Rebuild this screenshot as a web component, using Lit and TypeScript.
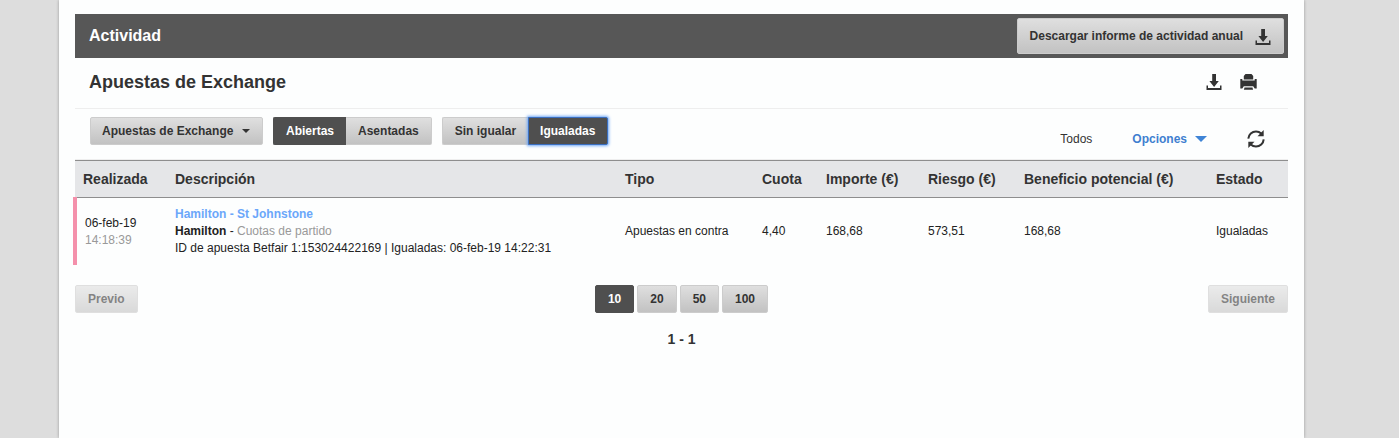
import { LitElement, html, css, svg } from "lit";
import { customElement, state } from "lit/decorators.js";

const downloadIcon = html`<svg class="icon" viewBox="0 0 16 16" width="16" height="16" aria-hidden="true">
  ${svg`<path d="M6.200 0h3.800v7h2.800L8.100 13 3.400 7h2.800z"/><path d="M.5 11.500H2V14h12v-2.500h1.500V16H.5z"/>`}
</svg>`;

const printIcon = html`<svg class="icon" viewBox="0 0 17 16" width="17" height="16" aria-hidden="true">
  ${svg`<path d="M5.500 0h6l1.700 2v3.600H3.800V2z"/><path d="M.3 5h2v1.500h12.400V5h2v9.500h-2l-1.500-2.300H3.800L2.300 14.500h-2z"/><path d="M4.500 13.500h8l.6 2.300H3.900z"/>`}
</svg>`;

const refreshIcon = html`<svg class="icon" viewBox="0 0 18 18" width="18" height="18" aria-hidden="true">
  ${svg`<path d="M1.300 8.600C1.600 4.600 5 1.400 9 1.400c2.200 0 3.900.8 5.200 2.100" fill="none" stroke="#333" stroke-width="2"/>
  <path d="M16.700 0v6.200h-6.200z"/>
  <path d="M16.700 9.400c-.3 4-3.700 7.200-7.700 7.200-2.200 0-3.900-.8-5.200-2.100" fill="none" stroke="#333" stroke-width="2"/>
  <path d="M1.300 18v-6.200h6.200z"/>`}
</svg>`;

interface Bet {
  date: string;
  time: string;
  event: string;
  selection: string;
  market: string;
  detail: string;
  type: string;
  odds: string;
  stake: string;
  risk: string;
  profit: string;
  status: string;
}

const bets: Bet[] = [
  {
    date: "06-feb-19",
    time: "14:18:39",
    event: "Hamilton - St Johnstone",
    selection: "Hamilton",
    market: "Cuotas de partido",
    detail: "ID de apuesta Betfair 1:153024422169 | Igualadas: 06-feb-19 14:22:31",
    type: "Apuestas en contra",
    odds: "4,40",
    stake: "168,68",
    risk: "573,51",
    profit: "168,68",
    status: "Igualadas",
  },
];

@customElement("app-root")
export class AppRoot extends LitElement {
  @state() private settled = "Abiertas";
  @state() private matched = "Igualadas";
  @state() private pageSize = 10;

  static styles = css`
    :host {
      display: block;
      box-sizing: border-box;
      min-height: 100vh;
      padding: 0 95px 0 59px;
      background: #ddd;
      color: #333;
      font: 12px/17px "Liberation Sans", Arial, sans-serif;
    }
    * { box-sizing: border-box; }
    h1, h2, p { margin: 0; }
    button, select { font: inherit; color: inherit; cursor: pointer; }
    .icon { display: block; fill: #333; }
    .panel {
      min-height: 100vh;
      padding: 14px 16px 0;
      background: #fdfefe;
      box-shadow: 0 0 3px rgba(0, 0, 0, 0.3);
    }
    .bar {
      display: flex;
      align-items: center;
      justify-content: space-between;
      padding: 4px 4px 4px 14px;
      background: #575757;
    }
    .bar h1 { color: #fff; font-size: 16px; line-height: 20px; }
    .btn {
      height: 28px;
      padding: 0 12px;
      border: 1px solid #ccc;
      border-radius: 2px;
      background: linear-gradient(#dfdfdf, #c2c2c2);
      font-weight: bold;
      white-space: nowrap;
    }
    .btn.on { background: #4f4f4f; border-color: #4f4f4f; color: #fff; }
    .btn:disabled { opacity: 0.6; cursor: default; }
    .report {
      display: flex;
      align-items: center;
      gap: 12px;
      height: 36px;
    }
    .report .icon { margin-top: 2px; }
    .title {
      display: flex;
      align-items: center;
      justify-content: space-between;
      height: 51px;
      padding: 0 31px 3px 14px;
      border-bottom: 1px solid #eee;
    }
    .title h2 { font-size: 18px; line-height: 22px; }
    .tools { display: flex; gap: 18px; }
    .plain { padding: 0; border: 0; background: none; }
    .toolbar {
      display: flex;
      align-items: flex-start;
      gap: 10px;
      height: 51px;
      padding: 8px 23px 0 15px;
      border-bottom: 1px solid #eee;
    }
    .pick { display: grid; align-items: center; }
    .pick select { grid-area: 1 / 1; appearance: none; padding: 0 28px 0 11px; }
    .pick .caret { grid-area: 1 / 1; justify-self: end; margin-right: 13px; pointer-events: none; }
    .caret { display: block; }
    .group { display: flex; }
    .group .btn:first-child { border-radius: 2px 0 0 2px; border-right: 0; }
    .group .btn:last-child { border-radius: 0 2px 2px 0; border-left: 0; padding: 0 12px; }
    .group .btn.focus { outline: none; border: 1px solid #3b6fc0; padding: 0 12px 0 11px; box-shadow: 0 0 3px 1px #6fa8f7; z-index: 1; }
    .side {
      display: flex;
      align-items: center;
      height: 18px;
      margin: 13px 0 0 auto;
    }
    .options {
      display: flex;
      align-items: center;
      gap: 8px;
      margin: 0 40px;
      color: #3f7fd0;
      font-weight: bold;
    }
    table { width: 100%; border-collapse: collapse; table-layout: fixed; }
    th, td { padding: 0 0 0 8px; text-align: left; }
    thead { background: #e5e6e8; }
    th { height: 37px; box-shadow: inset 0 1px #8e8e8e; font-size: 14px; line-height: 18px; white-space: nowrap; }
    td { padding-top: 9px; padding-bottom: 8px; color: #222; background: linear-gradient(#8e8e8e, #8e8e8e) 0 0 / 100% 1px no-repeat; }
    td:first-child {
      padding-left: 10px;
      background:
        linear-gradient(#f490ab, #f490ab) 0 0 / 2px 100% no-repeat,
        linear-gradient(#8e8e8e, #8e8e8e) 0 0 / 100% 1px no-repeat;
      box-shadow: -2px 0 #f490ab;
    }
    .muted { color: #999; }
    .event { color: #6ba7fa; font-weight: bold; text-decoration: none; }
    .w-date { width: 92px; }
    .w-type { width: 137px; }
    .w-odds { width: 64px; }
    .w-stake { width: 102px; }
    .w-risk { width: 96px; }
    .w-profit { width: 192px; }
    .w-status { width: 80px; }
    .pager {
      display: grid;
      grid-template-columns: 1fr auto 1fr;
      margin-top: 20px;
    }
    .prev { justify-self: start; }
    .next { justify-self: end; }
    .sizes { display: flex; gap: 3px; }
    .range {
      padding: 17px 0;
      text-align: center;
      font-size: 14px;
      line-height: 18px;
      font-weight: bold;
    }
  `;

  private toggle(label: string, current: string, pick: (v: string) => void, focus = false) {
    const on = label === current;
    return html`<button
      class="btn ${on ? "on" : ""} ${on && focus ? "focus" : ""}"
      aria-pressed=${on}
      @click=${() => pick(label)}
    >${label}</button>`;
  }

  render() {
    return html`
      <main class="panel">
        <header class="bar">
          <h1>Actividad</h1>
          <button class="btn report">Descargar informe de actividad anual ${downloadIcon}</button>
        </header>
        <div class="title">
          <h2>Apuestas de Exchange</h2>
          <div class="tools">
            <button class="plain" aria-label="Descargar">${downloadIcon}</button>
            <button class="plain" aria-label="Imprimir">${printIcon}</button>
          </div>
        </div>
        <div class="toolbar">
          <div class="pick">
            <select class="btn" aria-label="Producto"><option>Apuestas de Exchange</option></select>
            <svg class="caret" width="8" height="4" viewBox="0 0 8 4" aria-hidden="true"><path d="M0 0h8L4 4z" fill="#333" /></svg>
          </div>
          <div class="group">
            ${["Abiertas", "Asentadas"].map((l) => this.toggle(l, this.settled, (v) => (this.settled = v)))}
          </div>
          <div class="group">
            ${["Sin igualar", "Igualadas"].map((l) => this.toggle(l, this.matched, (v) => (this.matched = v), true))}
          </div>
          <div class="side">
            <span>Todos</span>
            <button class="plain options">Opciones
              <svg class="caret" width="12" height="6" viewBox="0 0 12 6" aria-hidden="true"><path d="M0 0h12L6 6z" fill="#3f84d6" /></svg>
            </button>
            <button class="plain" aria-label="Actualizar">${refreshIcon}</button>
          </div>
        </div>
        <table>
          <thead>
            <tr>
              <th class="w-date">Realizada</th>
              <th>Descripción</th>
              <th class="w-type">Tipo</th>
              <th class="w-odds">Cuota</th>
              <th class="w-stake">Importe (€)</th>
              <th class="w-risk">Riesgo (€)</th>
              <th class="w-profit">Beneficio potencial (€)</th>
              <th class="w-status">Estado</th>
            </tr>
          </thead>
          <tbody>
            ${bets.map(
              (b) => html`<tr>
                <td>${b.date}<br /><span class="muted">${b.time}</span></td>
                <td>
                  <a class="event" href="#">${b.event}</a><br />
                  <b>${b.selection}</b> - <span class="muted">${b.market}</span><br />
                  ${b.detail}
                </td>
                <td>${b.type}</td>
                <td>${b.odds}</td>
                <td>${b.stake}</td>
                <td>${b.risk}</td>
                <td>${b.profit}</td>
                <td>${b.status}</td>
              </tr>`
            )}
          </tbody>
        </table>
        <nav class="pager">
          <button class="btn prev" disabled>Previo</button>
          <div class="sizes">
            ${[10, 20, 50, 100].map(
              (n) => html`<button class="btn ${n === this.pageSize ? "on" : ""}" @click=${() => (this.pageSize = n)}>${n}</button>`
            )}
          </div>
          <button class="btn next" disabled>Siguiente</button>
        </nav>
        <p class="range">1 - 1</p>
      </main>
    `;
  }
}
